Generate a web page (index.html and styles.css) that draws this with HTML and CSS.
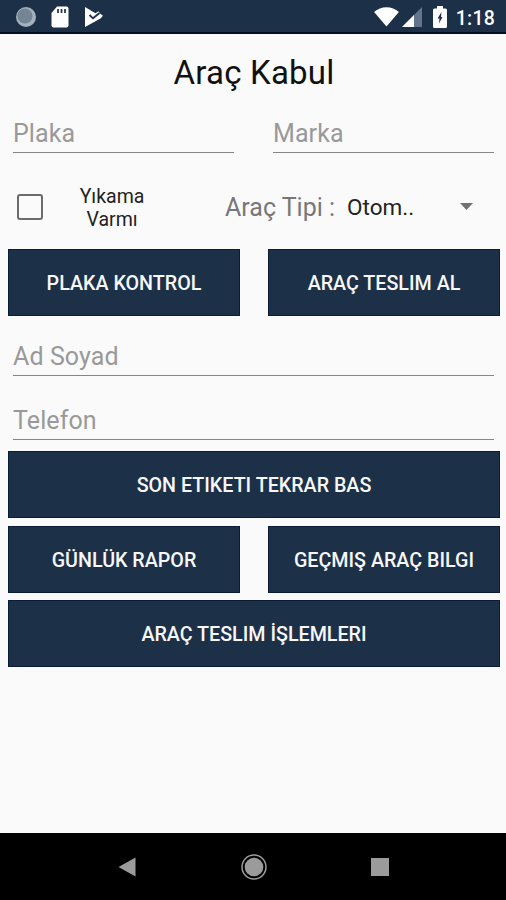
FILE: index.html
```html
<!DOCTYPE html>
<html lang="tr">
<head>
<meta charset="utf-8">
<title>Araç Kabul</title>
<link rel="stylesheet" href="styles.css">
</head>
<body>
<header class="status">
  <div class="status-group">
    <svg class="ic-sync" width="22" height="22" viewBox="0 0 22 22"><circle cx="11" cy="11" r="10" fill="#a5b1bc"/><circle cx="10" cy="10" r="7.6" fill="#748595"/></svg>
    <svg class="ic-sd" width="18" height="22" viewBox="0 0 18 22"><path d="M6 .5h9.500a2 2 0 0 1 2 2v17a2 2 0 0 1-2 2h-13a2 2 0 0 1-2-2V7z" fill="#fff"/><path d="M7 3v4M10.500 3v4M14 3v4" stroke="#1c3048" stroke-width="1.700"/></svg>
    <svg class="ic-play" width="20" height="22" viewBox="0 0 20 22"><path d="M1 1l10.500 6.200 3-2 1.500 2.300 3 2.300-2.500 2.700L1 21z" fill="#fff"/><path d="M5.500 9l3.500 3.300 6.500-5.300" fill="none" stroke="#1c3048" stroke-width="1.800"/></svg>
  </div>
  <div class="status-group">
    <svg class="ic-wifi" width="25" height="20" viewBox="0 0 26 21"><path d="M0 5.300C7-1.300 19-1.300 26 5.300L13 20.500z" fill="#fff"/></svg>
    <svg class="ic-cell" width="20" height="20" viewBox="0 0 20 20"><path d="M20 0v20H0z" fill="#62758a"/><path d="M12 8v12H0z" fill="#fff"/></svg>
    <svg class="ic-batt" width="14" height="22" viewBox="0 0 14 22"><path d="M4 0h6v2.500h2.500a1.500 1.500 0 0 1 1.500 1.500v16.500a1.500 1.500 0 0 1-1.500 1.500h-11A1.500 1.500 0 0 1 0 20.500V4a1.500 1.500 0 0 1 1.500-1.500H4z" fill="#fff"/><path d="M8.500 6L4.500 12.500H6.500L6 17.500L9.500 11H8z" fill="#1c3048"/></svg>
    <span class="clock">1:18</span>
  </div>
</header>
<main class="content">
  <h1 class="title">Araç Kabul</h1>
  <div class="pair">
    <div class="field">Plaka</div>
    <div class="field">Marka</div>
  </div>
  <div class="options">
    <span class="checkbox"></span>
    <span class="check-label">Yıkama<br>Varmı</span>
    <span class="type-label">Araç Tipi :</span>
    <span class="type-value">Otom..</span>
    <svg class="caret" width="13" height="7" viewBox="0 0 13 7"><path d="M0 0h13L6.500 7z" fill="#707070"/></svg>
  </div>
  <div class="pair">
    <div class="button">PLAKA KONTROL</div>
    <div class="button">ARAÇ TESLIM AL</div>
  </div>
  <div class="field name">Ad Soyad</div>
  <div class="field phone">Telefon</div>
  <div class="actions">
    <div class="button">SON ETIKETI TEKRAR BAS</div>
    <div class="pair">
      <div class="button">GÜNLÜK RAPOR</div>
      <div class="button">GEÇMIŞ ARAÇ BILGI</div>
    </div>
    <div class="button">ARAÇ TESLIM İŞLEMLERI</div>
  </div>
</main>
<nav class="navbar">
  <svg width="18" height="20" viewBox="0 0 18 20"><path d="M17.500.5v19L.5 10z" fill="#9b9b9b"/></svg>
  <svg width="26" height="26" viewBox="0 0 26 26"><circle cx="13" cy="13" r="12" fill="none" stroke="#9b9b9b" stroke-width="1.500"/><circle cx="13" cy="13" r="9.300" fill="#9b9b9b"/></svg>
  <svg width="18" height="18" viewBox="0 0 18 18"><path d="M0 0h18v18H0z" fill="#9b9b9b"/></svg>
</nav>
</body>
</html>
```
FILE: styles.css
```css
* { box-sizing: border-box; }
body {
  margin: 0;
  width: 506px;
  height: 900px;
  display: flex;
  flex-direction: column;
  overflow: hidden;
  background: #fafafa;
  font-family: Roboto, sans-serif;
}
svg { display: block; flex: none; }
.status {
  height: 34px;
  flex: none;
  display: flex;
  justify-content: space-between;
  padding: 0 11px 0 15px;
  background: #1c3048;
  border-bottom: 2px solid #07101f;
}
.status-group { display: flex; align-items: flex-start; }
.ic-sync { margin-top: 6px; }
.ic-sd { margin: 6px 0 0 14px; }
.ic-play { margin: 6px 0 0 15px; }
.ic-wifi { margin-top: 7px; }
.ic-cell { margin: 7px 0 0 3px; }
.ic-batt { margin: 6px 0 0 11px; }
.clock {
  margin-left: 9px;
  line-height: 38px;
  font-size: 19.5px;
  font-weight: 500;
  letter-spacing: .2px;
  color: #fff;
}
.content { flex: 1; padding: 0 6px 0 8px; }
.title {
  margin: 0;
  height: 78px;
  font-size: 33px;
  font-weight: 400;
  line-height: 78px;
  letter-spacing: .2px;
  text-align: center;
  color: #111;
}
.pair { display: grid; grid-template-columns: 1fr 1fr; gap: 28px; }
.field {
  height: 41px;
  margin: 0 6px 0 5px;
  border-bottom: 1.5px solid #858585;
  font-size: 25px;
  line-height: 43px;
  letter-spacing: .1px;
  color: #999;
}
.options { height: 96px; display: flex; align-items: center; padding: 11px 27px 0 9px; }
.checkbox { width: 26px; height: 26px; border: 2px solid #6b6b6b; border-radius: 3px; }
.check-label {
  width: 70px;
  margin-left: 34px;
  padding-top: 2px;
  font-size: 19.5px;
  line-height: 23px;
  text-align: center;
  color: #222;
}
.type-label { margin-left: 78px; padding-top: 2px; font-size: 25px; color: #777; white-space: nowrap; }
.type-value { margin-left: 12px; font-size: 22.5px; color: #222; }
.caret { margin-left: auto; }
.button {
  height: 67px;
  background: #1c3048;
  border: 1px solid #0b1c35;
  font-size: 19.7px;
  font-weight: 500;
  line-height: 68px;
  text-align: center;
  color: #f7f7f7;
}
.name { margin-top: 19px; }
.phone { margin-top: 23px; }
.actions { display: flex; flex-direction: column; gap: 7.7px; margin-top: 11px; }
.navbar {
  height: 67px;
  flex: none;
  display: flex;
  align-items: center;
  justify-content: space-between;
  padding: 0 117px 0 118px;
  background: #000;
}
```
